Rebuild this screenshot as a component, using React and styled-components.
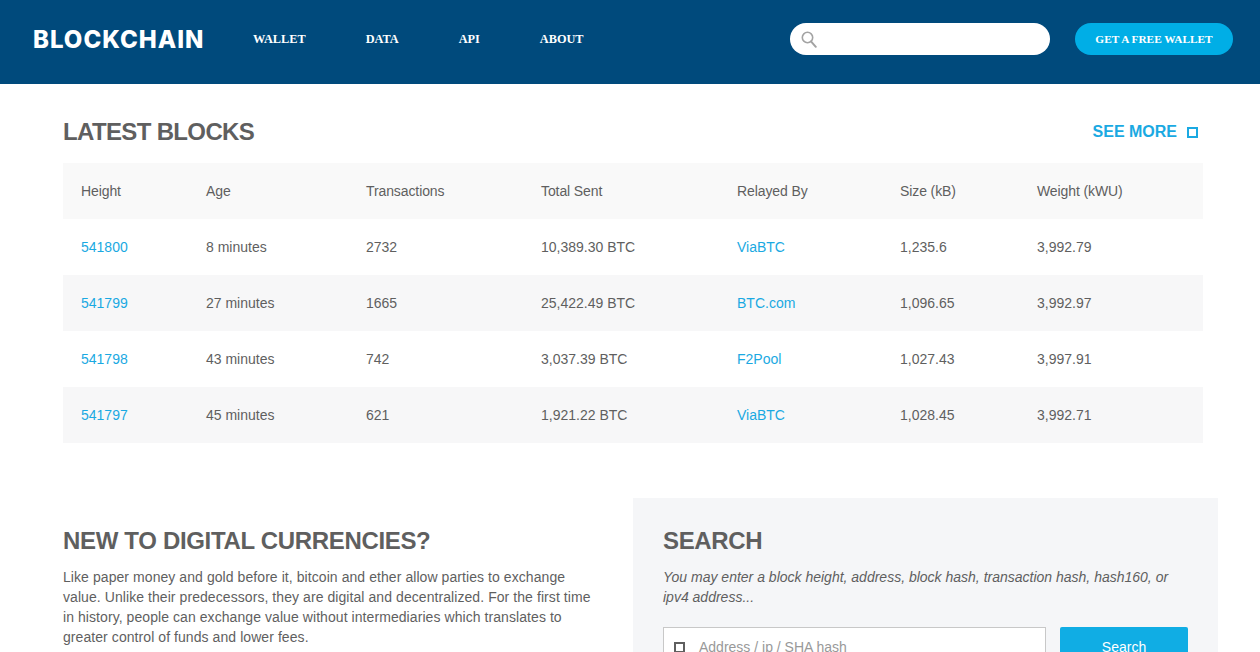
import React from "react";
import styled, { createGlobalStyle } from "styled-components";

const blocks = [
  { height: "541800", age: "8 minutes", txs: "2732", sent: "10,389.30 BTC", relay: "ViaBTC", size: "1,235.6", weight: "3,992.79" },
  { height: "541799", age: "27 minutes", txs: "1665", sent: "25,422.49 BTC", relay: "BTC.com", size: "1,096.65", weight: "3,992.97" },
  { height: "541798", age: "43 minutes", txs: "742", sent: "3,037.39 BTC", relay: "F2Pool", size: "1,027.43", weight: "3,997.91" },
  { height: "541797", age: "45 minutes", txs: "621", sent: "1,921.22 BTC", relay: "ViaBTC", size: "1,028.45", weight: "3,992.71" },
];

const navItems = ["Wallet", "Data", "API", "About"];
const columns = [125, 160, 175, 196, 163, 137, 184];
const headings = ["Height", "Age", "Transactions", "Total Sent", "Relayed By", "Size (kB)", "Weight (kWU)"];

const GlobalStyle = createGlobalStyle`
  html, body {
    margin: 0;
    padding: 0;
    background: #fff;
    overflow: hidden;
    font-family: "Liberation Sans", Arial, sans-serif;
    color: #5f5f5f;
  }
  * { box-sizing: border-box; }
`;

const Header = styled.header`
  height: 84px;
  background: #004a7c;
  display: flex;
  align-items: flex-start;
  padding: 23px 27px 0 33px;
`;

const Logo = styled.a`
  font-family: "Inter", sans-serif;
  font-weight: 800;
  font-size: 24px;
  line-height: 33px;
  letter-spacing: 1px;
  color: #fff;
  width: 220px;
`;

const Nav = styled.nav`
  display: flex;
  flex: 1;
  gap: 60px;
`;

const NavLink = styled.a`
  font-family: "Liberation Serif", serif;
  font-weight: 700;
  font-size: 12.3px;
  line-height: 32px;
  text-transform: uppercase;
  color: #fff;
`;

const SearchPill = styled.div`
  width: 260px;
  height: 32px;
  background: #fff;
  border-radius: 16px;
  display: flex;
  align-items: center;
  padding-left: 11px;
  margin-right: 25px;
`;

const WalletButton = styled.a`
  width: 158px;
  height: 32px;
  border-radius: 16px;
  background: #00aee6;
  color: #fff;
  font-family: "Liberation Serif", serif;
  font-weight: 700;
  font-size: 11.3px;
  line-height: 33px;
  text-align: center;
  text-transform: uppercase;
`;

const Main = styled.main`
  padding-left: 63px;
`;

const TitleRow = styled.div`
  width: 1140px;
  height: 79px;
  display: flex;
  align-items: center;
  justify-content: space-between;
  padding: 17px 5px 0 0;
`;

const Title = styled.h2`
  margin: 0;
  font-size: 24px;
  line-height: 32px;
  font-weight: 700;
  letter-spacing: -0.65px;
  color: #5f5f5f;
`;

const SeeMore = styled.a`
  display: flex;
  align-items: center;
  gap: 10px;
  font-size: 16px;
  font-weight: 700;
  color: #1aa9e2;
`;

const Glyph = styled.span`
  display: block;
  width: 11px;
  height: 11px;
  border: 2px solid ${(p) => p.$color};
  flex: none;
`;

const Table = styled.table`
  width: 1140px;
  table-layout: fixed;
  border-collapse: collapse;
  font-size: 14px;
`;

const Row = styled.tr`
  height: 56px;
  background: ${(p) => (p.$shaded ? p.$shaded : "#fff")};
`;

const Cell = styled.td`
  padding: 0 0 0 18px;
  color: #5f5f5f;
`;

const HeadCell = styled.th`
  padding: 0 0 0 18px;
  font-weight: 400;
  letter-spacing: -0.1px;
  text-align: left;
  color: #5f5f5f;
`;

const BlueLink = styled.a`
  color: #1aa9e2;
`;

const Lower = styled.section`
  display: flex;
  margin-top: 55px;
  align-items: flex-start;
`;

const Intro = styled.div`
  width: 570px;
  padding: 28px 40px 0 0;
`;

const Heading = styled.h2`
  margin: 0 0 11px;
  font-size: 24px;
  line-height: 30px;
  font-weight: 700;
  letter-spacing: -0.33px;
  color: #5f5f5f;
`;

const Text = styled.p`
  margin: 0;
  font-size: 14px;
  line-height: 20px;
  color: #5f5f5f;
  letter-spacing: ${(p) => (p.$italic ? "0" : "0.07px")};
  font-style: ${(p) => (p.$italic ? "italic" : "normal")};
`;

const SearchPanel = styled.div`
  width: 585px;
  padding: 28px 30px 30px;
  background: #f5f6f8;
`;

const SearchRow = styled.div`
  display: flex;
  gap: 14px;
  margin-top: 20px;
`;

const SearchField = styled.div`
  width: 383px;
  height: 40px;
  background: #fff;
  border: 1px solid #c8c8c8;
  display: flex;
  align-items: center;
  gap: 14px;
  padding-left: 10px;
  font-size: 14px;
  color: #999;
`;

const SearchButton = styled.button`
  width: 128px;
  height: 40px;
  border: none;
  border-radius: 2px;
  background: #10ade4;
  color: #fff;
  font-family: inherit;
  font-size: 14px;
`;

function MagnifierIcon() {
  return (
    <svg width="16" height="17" viewBox="0 0 16 17" fill="none" stroke="#a3a3a3" strokeWidth="1.6">
      <circle cx="6.5" cy="6.5" r="5.2" />
      <path d="M10.2 10.6L14.8 15.8" strokeWidth="2" strokeLinecap="round" />
    </svg>
  );
}

export default function App() {
  return (
    <>
      <GlobalStyle />
      <Header>
        <Logo>BLOCKCHAIN</Logo>
        <Nav>
          {navItems.map((item) => (
            <NavLink key={item}>{item}</NavLink>
          ))}
        </Nav>
        <SearchPill>
          <MagnifierIcon />
        </SearchPill>
        <WalletButton>Get a free wallet</WalletButton>
      </Header>
      <Main>
        <TitleRow>
          <Title>LATEST BLOCKS</Title>
          <SeeMore>
            SEE MORE
            <Glyph $color="#1aa9e2" />
          </SeeMore>
        </TitleRow>
        <Table>
          <colgroup>
            {columns.map((w, i) => (
              <col key={i} width={w} />
            ))}
          </colgroup>
          <thead>
            <Row $shaded="#f9f9f9">
              {headings.map((h) => (
                <HeadCell key={h}>{h}</HeadCell>
              ))}
            </Row>
          </thead>
          <tbody>
            {blocks.map((b, i) => (
              <Row key={b.height} $shaded={i % 2 === 1 ? "#f7f7f8" : null}>
                <Cell><BlueLink>{b.height}</BlueLink></Cell>
                <Cell>{b.age}</Cell>
                <Cell>{b.txs}</Cell>
                <Cell>{b.sent}</Cell>
                <Cell><BlueLink>{b.relay}</BlueLink></Cell>
                <Cell>{b.size}</Cell>
                <Cell>{b.weight}</Cell>
              </Row>
            ))}
          </tbody>
        </Table>
        <Lower>
          <Intro>
            <Heading>NEW TO DIGITAL CURRENCIES?</Heading>
            <Text>
              Like paper money and gold before it, bitcoin and ether allow parties to exchange value. Unlike their predecessors, they are digital and decentralized. For the first time in history, people can exchange value without intermediaries which translates to greater control of funds and lower fees.
            </Text>
          </Intro>
          <SearchPanel>
            <Heading>SEARCH</Heading>
            <Text $italic>
              You may enter a block height, address, block hash, transaction hash, hash160, or ipv4 address...
            </Text>
            <SearchRow>
              <SearchField>
                <Glyph $color="#5f5f5f" />
                Address / ip / SHA hash
              </SearchField>
              <SearchButton>Search</SearchButton>
            </SearchRow>
          </SearchPanel>
        </Lower>
      </Main>
    </>
  );
}
